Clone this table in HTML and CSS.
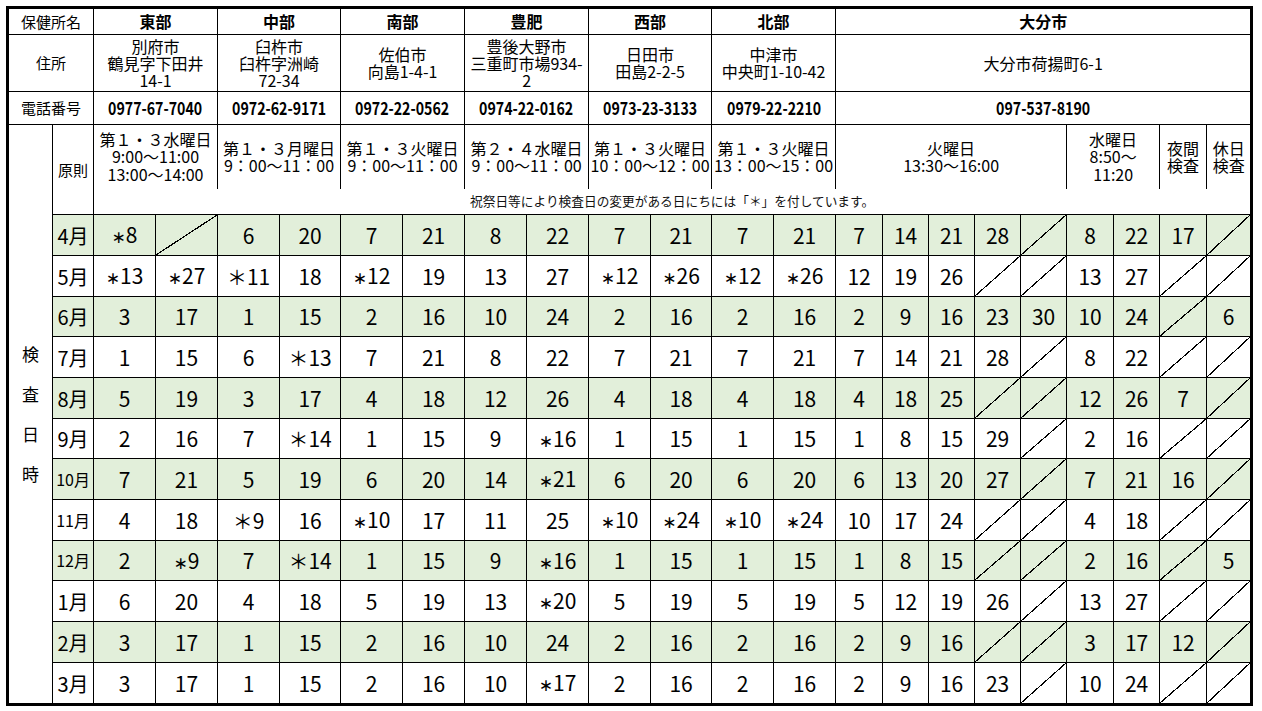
FILE: index.html
```html
<!DOCTYPE html>
<html lang="ja">
<head>
<meta charset="utf-8">
<title>検査日時</title>
<link rel="stylesheet" href="styles.css">
</head>
<body>
<table class="sched">
<colgroup>
<col class="c44"><col class="c41">
<col class="c62"><col class="c62"><col class="c62"><col class="c61">
<col class="c62"><col class="c62"><col class="c62"><col class="c62">
<col class="c62"><col class="c61"><col class="c62"><col class="c62">
<col class="c47"><col class="c46"><col class="c46"><col class="c46"><col class="c46">
<col class="c47"><col class="c46"><col class="c47"><col class="c43">
</colgroup>
<tbody>
<tr class="r1">
<td colspan="2" class="hd">保健所名</td>
<td colspan="2" class="off">東部</td>
<td colspan="2" class="off">中部</td>
<td colspan="2" class="off">南部</td>
<td colspan="2" class="off">豊肥</td>
<td colspan="2" class="off">西部</td>
<td colspan="2" class="off">北部</td>
<td colspan="9" class="off">大分市</td>
</tr>
<tr class="r2">
<td colspan="2" class="hd">住所</td>
<td colspan="2" class="addr">別府市<br>鶴見字下田井<br>14-1</td>
<td colspan="2" class="addr">臼杵市<br>臼杵字洲崎<br>72-34</td>
<td colspan="2" class="addr">佐伯市<br>向島1-4-1</td>
<td colspan="2" class="addr">豊後大野市<br>三重町市場934-<br>2</td>
<td colspan="2" class="addr">日田市<br>田島2-2-5</td>
<td colspan="2" class="addr">中津市<br>中央町1-10-42</td>
<td colspan="9" class="addr">大分市荷揚町6-1</td>
</tr>
<tr class="r3">
<td colspan="2" class="hd">電話番号</td>
<td colspan="2" class="tel"><span class="sq">0977-67-7040</span></td>
<td colspan="2" class="tel"><span class="sq">0972-62-9171</span></td>
<td colspan="2" class="tel"><span class="sq">0972-22-0562</span></td>
<td colspan="2" class="tel"><span class="sq">0974-22-0162</span></td>
<td colspan="2" class="tel"><span class="sq">0973-23-3133</span></td>
<td colspan="2" class="tel"><span class="sq">0979-22-2210</span></td>
<td colspan="9" class="tel"><span class="sq">097-537-8190</span></td>
</tr>
<tr class="r4">
<td rowspan="14" class="kd nb">検<br>査<br>日<br>時</td>
<td rowspan="2" class="gen">原則</td>
<td colspan="2" class="rule nb">第１・３水曜日<br>9:00～11:00<br>13:00～14:00</td>
<td colspan="2" class="rule nb">第１・３月曜日<br>9：00～11：00</td>
<td colspan="2" class="rule nb">第１・３火曜日<br>9：00～11：00</td>
<td colspan="2" class="rule nb">第２・４水曜日<br>9：00～11：00</td>
<td colspan="2" class="rule nb">第１・３火曜日<br>10：00～12：00</td>
<td colspan="2" class="rule nb">第１・３火曜日<br>13：00～15：00</td>
<td colspan="5" class="rule nb">火曜日<br>13:30～16:00</td>
<td colspan="2" class="rule nb">水曜日<br>8:50～<br>11:20</td>
<td class="rule nb">夜間<br>検査</td>
<td class="rule nb">休日<br>検査</td>
</tr>
<tr class="r5">
<td colspan="21" class="note">祝祭日等により検査日の変更がある日にちには「＊」を付しています。</td>
</tr>
<tr class="d g h41"><td class="m">4月</td><td><span class="a">∗</span>8</td><td class="x"></td><td>6</td><td>20</td><td>7</td><td>21</td><td>8</td><td>22</td><td>7</td><td>21</td><td>7</td><td>21</td><td>7</td><td>14</td><td>21</td><td>28</td><td class="x"></td><td>8</td><td>22</td><td>17</td><td class="x"></td></tr>
<tr class="d h41"><td class="m">5月</td><td><span class="a">∗</span>13</td><td><span class="a">∗</span>27</td><td><span class="b">＊</span>11</td><td>18</td><td><span class="a">∗</span>12</td><td>19</td><td>13</td><td>27</td><td><span class="a">∗</span>12</td><td><span class="a">∗</span>26</td><td><span class="a">∗</span>12</td><td><span class="a">∗</span>26</td><td>12</td><td>19</td><td>26</td><td class="x"></td><td class="x"></td><td>13</td><td>27</td><td class="x"></td><td class="x"></td></tr>
<tr class="d g h40"><td class="m">6月</td><td>3</td><td>17</td><td>1</td><td>15</td><td>2</td><td>16</td><td>10</td><td>24</td><td>2</td><td>16</td><td>2</td><td>16</td><td>2</td><td>9</td><td>16</td><td>23</td><td>30</td><td>10</td><td>24</td><td class="x"></td><td>6</td></tr>
<tr class="d h41"><td class="m">7月</td><td>1</td><td>15</td><td>6</td><td><span class="b">＊</span>13</td><td>7</td><td>21</td><td>8</td><td>22</td><td>7</td><td>21</td><td>7</td><td>21</td><td>7</td><td>14</td><td>21</td><td>28</td><td class="x"></td><td>8</td><td>22</td><td class="x"></td><td class="x"></td></tr>
<tr class="d g h41"><td class="m">8月</td><td>5</td><td>19</td><td>3</td><td>17</td><td>4</td><td>18</td><td>12</td><td>26</td><td>4</td><td>18</td><td>4</td><td>18</td><td>4</td><td>18</td><td>25</td><td class="x"></td><td class="x"></td><td>12</td><td>26</td><td>7</td><td class="x"></td></tr>
<tr class="d h40"><td class="m">9月</td><td>2</td><td>16</td><td>7</td><td><span class="b">＊</span>14</td><td>1</td><td>15</td><td>9</td><td><span class="a">∗</span>16</td><td>1</td><td>15</td><td>1</td><td>15</td><td>1</td><td>8</td><td>15</td><td>29</td><td class="x"></td><td>2</td><td>16</td><td class="x"></td><td class="x"></td></tr>
<tr class="d g h41"><td class="m s">10月</td><td>7</td><td>21</td><td>5</td><td>19</td><td>6</td><td>20</td><td>14</td><td><span class="a">∗</span>21</td><td>6</td><td>20</td><td>6</td><td>20</td><td>6</td><td>13</td><td>20</td><td>27</td><td class="x"></td><td>7</td><td>21</td><td>16</td><td class="x"></td></tr>
<tr class="d h41"><td class="m s">11月</td><td>4</td><td>18</td><td><span class="b">＊</span>9</td><td>16</td><td><span class="a">∗</span>10</td><td>17</td><td>11</td><td>25</td><td><span class="a">∗</span>10</td><td><span class="a">∗</span>24</td><td><span class="a">∗</span>10</td><td><span class="a">∗</span>24</td><td>10</td><td>17</td><td>24</td><td class="x"></td><td class="x"></td><td>4</td><td>18</td><td class="x"></td><td class="x"></td></tr>
<tr class="d g h40"><td class="m s">12月</td><td>2</td><td><span class="a">∗</span>9</td><td>7</td><td><span class="b">＊</span>14</td><td>1</td><td>15</td><td>9</td><td><span class="a">∗</span>16</td><td>1</td><td>15</td><td>1</td><td>15</td><td>1</td><td>8</td><td>15</td><td class="x"></td><td class="x"></td><td>2</td><td>16</td><td class="x"></td><td>5</td></tr>
<tr class="d h41"><td class="m">1月</td><td>6</td><td>20</td><td>4</td><td>18</td><td>5</td><td>19</td><td>13</td><td><span class="a">∗</span>20</td><td>5</td><td>19</td><td>5</td><td>19</td><td>5</td><td>12</td><td>19</td><td>26</td><td class="x"></td><td>13</td><td>27</td><td class="x"></td><td class="x"></td></tr>
<tr class="d g h41"><td class="m">2月</td><td>3</td><td>17</td><td>1</td><td>15</td><td>2</td><td>16</td><td>10</td><td>24</td><td>2</td><td>16</td><td>2</td><td>16</td><td>2</td><td>9</td><td>16</td><td class="x"></td><td class="x"></td><td>3</td><td>17</td><td>12</td><td class="x"></td></tr>
<tr class="d h40"><td class="m">3月</td><td>3</td><td>17</td><td>1</td><td>15</td><td>2</td><td>16</td><td>10</td><td><span class="a">∗</span>17</td><td>2</td><td>16</td><td>2</td><td>16</td><td>2</td><td>9</td><td>16</td><td>23</td><td class="x"></td><td>10</td><td>24</td><td class="x"></td><td class="x"></td></tr>
</tbody>
</table>
</body>
</html>
```

FILE: styles.css
```css
* { box-sizing: border-box; }

body {
  margin: 0;
  background: #fff;
}

.sched {
  margin: 6px;
  width: 1247px;
  table-layout: fixed;
  border: 3px solid #000;
  border-collapse: separate;
  border-spacing: 0;
  font-family: "Noto Sans CJK JP", sans-serif;
  color: #000;
}

.c44 { width: 44px; }
.c41 { width: 41px; }
.c62 { width: 62px; }
.c61 { width: 61px; }
.c47 { width: 47px; }
.c46 { width: 46px; }
.c43 { width: 43px; }

.sched td {
  padding: 0;
  border-right: 1px solid #000;
  border-bottom: 1px solid #000;
  text-align: center;
  vertical-align: middle;
  line-height: 1.15;
  white-space: nowrap;
  overflow: hidden;
}

.sched tr > td:last-child { border-right: 0; }
.sched tr:last-child > td { border-bottom: 0; }
.sched td.nb { border-bottom: 0; }

.r1 { height: 26px; }
.r2 { height: 57px; }
.r3 { height: 33px; }
.r4 { height: 64px; }
.r5 { height: 26px; }
.h41 { height: 41px; }
.h40 { height: 40px; }

.hd {
  font-size: 15px;
}

.off {
  font-size: 16px;
  font-weight: bold;
}

.addr {
  font-size: 16px;
  line-height: 17px !important;
}

.tel {
  font-size: 17.5px;
  font-weight: bold;
}

.sq {
  display: inline-block;
  transform: scaleX(0.81);
  transform-origin: 50% 50%;
}

.rule {
  font-size: 16px;
  line-height: 17.5px !important;
}

.gen {
  font-size: 15px;
}

.kd {
  font-size: 17px;
  line-height: 40px !important;
}

.note {
  font-size: 12.7px;
  color: #111;
}

.d td {
  font-size: 21px;
}

.d td.m {
  font-size: 20px;
}

.d td.m.s {
  font-size: 16px;
}

.g td {
  background-color: #e2efda;
}

.a {
  font-family: "DejaVu Sans", sans-serif;
  font-size: 17px;
}

.b {
  font-size: 20px;
}

.x {
  background-image: linear-gradient(to bottom right,
    transparent calc(50% - 0.6px),
    #000 calc(50% - 0.6px),
    #000 calc(50% + 0.6px),
    transparent calc(50% + 0.6px));
}
```
